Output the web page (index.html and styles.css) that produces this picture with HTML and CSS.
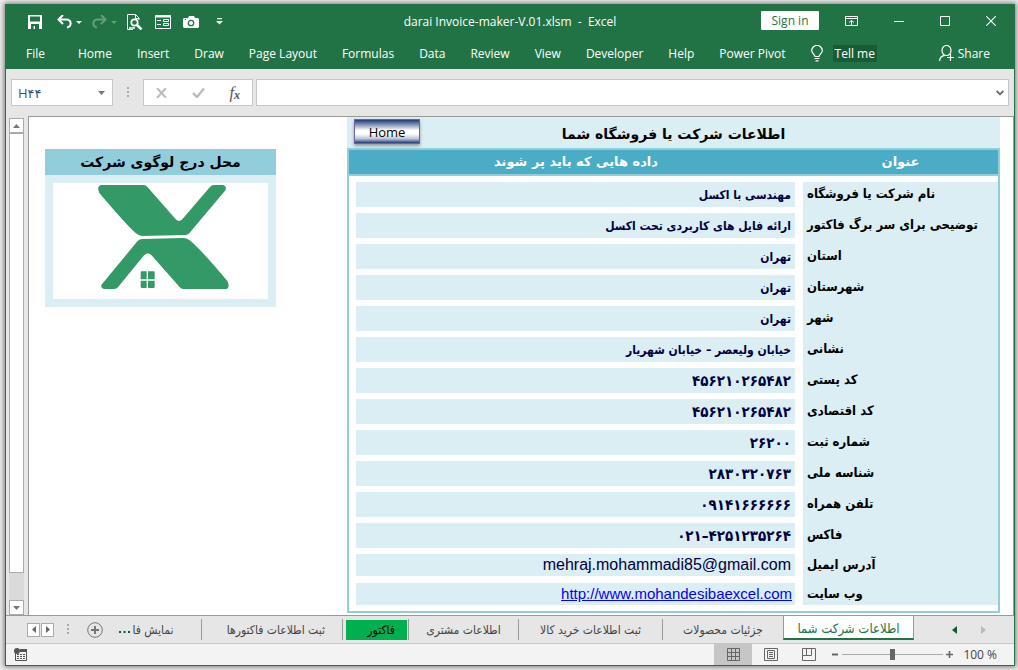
FILE: index.html
```html
<!DOCTYPE html>
<html lang="fa">
<head>
<meta charset="utf-8">
<title>darai Invoice-maker-V.01.xlsm - Excel</title>
<link rel="stylesheet" href="styles.css">
</head>
<body>
<div class="window">
  <header class="titlebar">
    <div class="quick">
      <button class="plain" aria-label="Save"><svg width="14" height="14" viewBox="0 0 14 14"><path fill="#fff" fill-rule="evenodd" d="M0 0h14v14H0zM2 1.500v5h10v-5zM3 9v5h2.500v-3H7v3h4V9z"/></svg></button>
      <button class="plain undo" aria-label="Undo"><svg width="25" height="14" viewBox="0 0 25 14"><path d="M1.500 4.500H9c6 0 6 7 1 8M6 0L1.500 4.500 6 9" fill="none" stroke="#fff" stroke-width="2"/><path fill="#fff" d="M19 6h6l-3 3z"/></svg></button>
      <button class="plain redo" aria-label="Redo"><svg width="25" height="14" viewBox="0 0 25 14"><path d="M13.500 4.500H6c-6 0-6 7-1 8M9 0l4.500 4.500L9 9" fill="none" stroke="#fff" stroke-width="2"/><path fill="#fff" d="M19 6h6l-3 3z"/></svg></button>
      <button class="plain" aria-label="Print preview"><svg width="16" height="16" viewBox="0 0 16 16" fill="none" stroke="#fff"><path d="M12 6V4L8.500.500H.500v15H6M8.500 1v3.500H12"/><circle cx="7.500" cy="8.500" r="3.200" stroke-width="1.700"/><path d="M10 11l4.500 4.500" stroke-width="2.600"/><path d="M2 14h6" stroke-width="1.500"/></svg></button>
      <button class="plain" aria-label="Form"><svg width="16" height="14" viewBox="0 0 16 14" fill="none" stroke="#fff"><path d="M.5.5h15v13H.5z"/><path stroke-width="2" d="M0 1.500h16"/><path d="M2 5.500h4M2 9.500h4M8.500 4.500h5v2h-5zM8.500 8.500h5v2h-5z"/></svg></button>
      <button class="plain" aria-label="Camera"><svg width="16" height="12" viewBox="0 0 16 12"><path fill="#fff" d="M1 2h4l1-2h5l1 2h3l1 1v8l-1 1H1l-1-1V3z"/><circle cx="8" cy="7" r="2.700" fill="none" stroke="#217346" stroke-width="1.300"/><path fill="#217346" d="M2 3h1v1H2z"/></svg></button>
      <button class="plain" aria-label="Customize toolbar"><svg width="7" height="7" viewBox="0 0 7 7"><path fill="#fff" d="M1 0h5v1.300H1zM0 3h7L3.500 6.500z"/></svg></button>
    </div>
    <div class="doc-name">darai Invoice-maker-V.01.xlsm&nbsp; -&nbsp; Excel</div>
    <div class="window-tools">
      <button class="signin">Sign in</button>
      <button class="plain" aria-label="Ribbon display"><svg width="13" height="10" viewBox="0 0 13 10" fill="none" stroke="#fff"><path d="M.5.500h12v9H.500zM.500 2.500h12M6.500 9V4.500M4 6.500l2.500-2 2.500 2"/></svg></button>
      <button class="plain" aria-label="Minimize"><svg width="10" height="10" viewBox="0 0 10 10"><path d="M0 5.500h10" stroke="#fff"/></svg></button>
      <button class="plain" aria-label="Maximize"><svg width="10" height="10" viewBox="0 0 10 10"><path d="M.5.500h9v9h-9z" fill="none" stroke="#fff"/></svg></button>
      <button class="plain" aria-label="Close"><svg width="10" height="10" viewBox="0 0 10 10"><path d="M0 0l10 10M10 0L0 10" stroke="#fff" stroke-width="1.200"/></svg></button>
    </div>
  </header>

  <nav class="ribbon" dir="ltr">
    <button class="plain file">File</button>
    <button class="plain">Home</button>
    <button class="plain">Insert</button>
    <button class="plain">Draw</button>
    <button class="plain">Page Layout</button>
    <button class="plain">Formulas</button>
    <button class="plain">Data</button>
    <button class="plain">Review</button>
    <button class="plain">View</button>
    <button class="plain">Developer</button>
    <button class="plain">Help</button>
    <button class="plain">Power Pivot</button>
    <button class="plain tell"><svg width="12" height="17" viewBox="0 0 12 17" fill="none" stroke="#fff" stroke-width="1.200"><path d="M4 11.500C4 9.500.700 8.500.700 5.500a5.300 5 0 0 1 10.600 0C11.300 8.500 8 9.500 8 11.500zM3.500 13.500h5M4.500 15.800h3"/></svg><span>Tell me</span></button>
    <button class="plain share"><svg width="15" height="17" viewBox="0 0 15 17" fill="none" stroke="#fff" stroke-width="1.200"><ellipse cx="7.500" cy="5.500" rx="4.500" ry="5"/><path d="M.600 16c0-3 2-5 5-5.600M8 12.500h7M11.500 9v7"/></svg>Share</button>
  </nav>

  <div class="formula-bar">
    <div class="name-box">
      <input type="text" aria-label="Name box" value="H۴۴">
      <button class="plain" aria-label="Open name list"><svg width="7" height="4" viewBox="0 0 7 4"><path fill="#777" d="M0 0h7L3.500 4z"/></svg></button>
    </div>
    <svg class="dots" width="3" height="11" viewBox="0 0 3 11"><path fill="#aaa" d="M0 0h2v2H0zM0 4h2v2H0zM0 8h2v2H0z"/></svg>
    <div class="formula-tools">
      <button class="plain" aria-label="Cancel"><svg width="11" height="10" viewBox="0 0 11 10"><path d="M1 0l9 10M10 0L1 10" stroke="#bbb" stroke-width="2"/></svg></button>
      <button class="plain" aria-label="Enter"><svg width="13" height="10" viewBox="0 0 13 10"><path d="M1 5l4 4 7-8.500" fill="none" stroke="#bbb" stroke-width="2.400"/></svg></button>
      <button class="plain fx" aria-label="Insert function"><i>f</i><i class="fx-x">x</i></button>
    </div>
    <div class="formula-input">
      <input type="text" aria-label="Formula">
      <button class="plain" aria-label="Expand formula bar"><svg width="8" height="6" viewBox="0 0 8 6"><path d="M.700 1L4 4.300 7.300 1" fill="none" stroke="#666" stroke-width="1.800"/></svg></button>
    </div>
  </div>

  <main class="work">
    <div class="scrollbar">
      <button class="plain scroll-button" aria-label="Scroll up"><svg width="7" height="4" viewBox="0 0 7 4"><path fill="#777" d="M3.500 0L7 4H0z"/></svg></button>
      <div class="thumb"></div>
      <div class="track"></div>
      <button class="plain scroll-button" aria-label="Scroll down"><svg width="7" height="4" viewBox="0 0 7 4"><path fill="#777" d="M0 0h7L3.500 4z"/></svg></button>
    </div>
    <div class="sheet">
      <section class="logo-card">
        <h2 dir="rtl">محل درج لوگوی شرکت</h2>
        <div class="logo-frame">
          <svg viewBox="0 0 645 348" role="img" aria-label="Logo"><g transform="translate(-159 -219)" fill="#339966">
            <path d="M303 225H430Q438 225 443 232L522 322Q537 344 552 322L630 231Q634 225 642 225H668Q680 226 677 240L571 366Q566 374 558 375L425 378Q416 377 408 370Q382 348 298 249Q289 230 303 225Z"/>
            <path d="M304 525L412 394Q418 387 427 387L546 384Q558 383 568 390Q600 415 682 513Q691 530 680 537H550Q543 537 538 530L456 437Q444 422 431 437L355 530Q350 537 342 537H314Q302 536 304 525Z"/>
            <path d="M422 488q0-4 4-4h14v24h-18zM444 484h16q4 0 4 4v20h-20zM422 512h18v22h-14q-4 0-4-4zM444 512h20v18q0 4-4 4h-16z"/></g></svg>
        </div>
      </section>
      <section class="company">
        <div class="company-title">
          <button class="home">Home</button>
          <h1 dir="rtl">اطلاعات شرکت یا فروشگاه شما</h1>
        </div>
        <table>
          <thead><tr><th scope="col" dir="rtl">داده هایی که باید پر شوند</th><th scope="col" dir="rtl">عنوان</th></tr></thead>
          <tbody>
            <tr class="lead"><td></td><th></th></tr>
            <tr><td><bdi>مهندسی با اکسل</bdi></td><th scope="row"><bdi>نام شرکت یا فروشگاه</bdi></th></tr>
            <tr><td><bdi>ارائه فایل های کاربردی تحت اکسل</bdi></td><th scope="row"><bdi>توضیحی برای سر برگ فاکتور</bdi></th></tr>
            <tr><td><bdi>تهران</bdi></td><th scope="row"><bdi>استان</bdi></th></tr>
            <tr><td><bdi>تهران</bdi></td><th scope="row"><bdi>شهرستان</bdi></th></tr>
            <tr><td><bdi>تهران</bdi></td><th scope="row"><bdi>شهر</bdi></th></tr>
            <tr><td><bdi>خیابان ولیعصر – خیابان شهریار</bdi></td><th scope="row"><bdi>نشانی</bdi></th></tr>
            <tr><td class="number">۴۵۶۲۱۰۲۶۵۴۸۲</td><th scope="row"><bdi>کد پستی</bdi></th></tr>
            <tr><td class="number">۴۵۶۲۱۰۲۶۵۴۸۲</td><th scope="row"><bdi>کد اقتصادی</bdi></th></tr>
            <tr><td class="number">۲۶۲۰۰</td><th scope="row"><bdi>شماره ثبت</bdi></th></tr>
            <tr><td class="number">۲۸۳۰۳۲۰۷۶۳</td><th scope="row"><bdi>شناسه ملی</bdi></th></tr>
            <tr><td class="number">۰۹۱۴۱۶۶۶۶۶۶</td><th scope="row"><bdi>تلفن همراه</bdi></th></tr>
            <tr><td class="number">۰۲۱–۴۲۵۱۲۳۵۲۶۴</td><th scope="row"><bdi>فاکس</bdi></th></tr>
            <tr class="web"><td>mehraj.mohammadi85@gmail.com</td><th scope="row"><bdi>آدرس ایمیل</bdi></th></tr>
            <tr class="web last"><td><a href="http://www.mohandesibaexcel.com">http://www.mohandesibaexcel.com</a></td><th scope="row"><bdi>وب سایت</bdi></th></tr>
          </tbody>
        </table>
      </section>
    </div>
  </main>

  <nav class="sheets">
    <div class="sheet-nav">
      <button class="plain step" aria-label="Scroll left"><svg width="4" height="7" viewBox="0 0 4 7"><path fill="#666" d="M4 0v7L0 3.500z"/></svg></button>
      <button class="plain step" aria-label="Scroll right"><svg width="4" height="7" viewBox="0 0 4 7"><path fill="#666" d="M0 0v7l4-3.500z"/></svg></button>
      <svg class="dots" width="3" height="11" viewBox="0 0 3 11"><path fill="#aaa" d="M0 0h2v2H0zM0 4h2v2H0zM0 8h2v2H0z"/></svg>
      <button class="plain add" aria-label="New sheet"><svg width="16" height="16" viewBox="0 0 16 16" fill="none" stroke="#777"><circle cx="8" cy="8" r="7.300"/><path stroke-width="2" d="M4 8h8M8 4v8"/></svg></button>
      <button class="plain more" aria-label="More sheets"><svg width="11" height="2" viewBox="0 0 11 2"><path fill="#0b5c2e" d="M0 0h2v2H0zM4.500 0h2v2h-2zM9 0h2v2H9z"/></svg></button>
    </div>
    <button class="tab t-view">نمایش فا</button>
    <button class="tab t-invoices">ثبت اطلاعات فاکتورها</button>
    <button class="tab t-invoice"><span>فاکتور</span></button>
    <button class="tab t-customer">اطلاعات مشتری</button>
    <button class="tab t-buy">ثبت اطلاعات خرید کالا</button>
    <button class="tab t-products">جزئیات محصولات</button>
    <button class="tab t-active">اطلاعات شرکت شما</button>
    <div class="tab-arrows">
      <button class="plain" aria-label="Next sheet"><svg width="5" height="8" viewBox="0 0 5 8"><path fill="#0b5c2e" d="M5 0v8L0 4z"/></svg></button>
      <button class="plain" aria-label="Previous sheet"><svg width="5" height="8" viewBox="0 0 5 8"><path fill="#bbb" d="M0 0v8l5-4z"/></svg></button>
    </div>
  </nav>

  <footer class="status">
    <button class="plain macro" aria-label="Record macro"><svg width="13" height="13" viewBox="0 0 13 13"><path fill="none" stroke="#555" d="M1.500 5v7.500h11V1.500H7"/><path fill="#555" d="M6 1h7v3H6zM3 6h2v1H3zM6 6h2v1H6zM9 6h2v1H9zM3 8h2v1H3zM6 8h2v1H6zM9 8h2v1H9zM3 10h2v1H3zM6 10h2v1H6zM9 10h2v1H9z"/><circle cx="3" cy="3" r="3" fill="#555"/></svg></button>
    <div class="views">
      <button class="plain view on" aria-label="Normal"><svg width="13" height="13" viewBox="0 0 13 13" fill="none" stroke="#666"><path d="M.5.500h12v12H.500zM.500 4.500h12M.500 8.500h12M4.500.500v12M8.500.500v12"/></svg></button>
      <button class="plain view" aria-label="Page layout"><svg width="14" height="13" viewBox="0 0 14 13" fill="none" stroke="#666"><path d="M.5.500h13v12H.500zM3.500 2.500h7v8h-7zM5 4.500h4M5 6.500h4M5 8.500h4"/></svg></button>
      <button class="plain view" aria-label="Page break preview"><svg width="14" height="13" viewBox="0 0 14 13" fill="none" stroke="#666"><path d="M.5.500h13v12H.500zM4.500.500v7M9.500.500v7M.500 7.500h9"/></svg></button>
    </div>
    <div class="zoom">
      <button class="plain" aria-label="Zoom out"><svg width="7" height="7" viewBox="0 0 7 7"><path d="M0 3.500h6" stroke="#666" stroke-width="2"/></svg></button>
      <input type="range" min="0" max="100" value="50" aria-label="Zoom">
      <button class="plain" aria-label="Zoom in"><svg width="7" height="7" viewBox="0 0 7 7"><path d="M0 3.500h7M3.500 0v7" stroke="#666" stroke-width="1.600"/></svg></button>
      <span>100 %</span>
    </div>
  </footer>
</div>
</body>
</html>
```

FILE: styles.css
```css
* { box-sizing: border-box; }

body {
  margin: 0;
  height: 100vh;
  padding: 4px 3px 4px 5px;
  background: #ececec;
  font-family: "Open Sans", "Noto Sans", "DejaVu Sans", sans-serif;
  font-size: 12px;
}

button, input { font: inherit; color: inherit; }

.plain {
  display: flex;
  align-items: center;
  justify-content: center;
  margin: 0;
  padding: 0;
  border: 0;
  background: none;
}

svg { display: block; flex: none; }

.window {
  display: flex;
  flex-direction: column;
  height: 100%;
  border: 1px solid #217346;
  background: #e6e6e6;
  box-shadow: 0 0 5px 1px #777;
}

/* Title bar */
.titlebar {
  display: grid;
  grid-template-columns: 1fr auto 1fr;
  align-items: center;
  height: 33px;
  flex: none;
  background: #217346;
  color: #fff;
}

.quick { display: flex; align-items: center; gap: 12px; padding-left: 22px; }
.undo { margin-left: 3px; }
.redo { opacity: 0.3; margin: 0 -2px 0 -2px; }
.quick > :last-child { margin-left: 5px; }

.window-tools {
  display: flex;
  align-items: center;
  justify-content: flex-end;
  gap: 36px;
  padding: 0 18px 2px 0;
}

.signin {
  width: 58px;
  height: 19px;
  margin-right: -10px;
  padding: 0;
  border: 0;
  border-radius: 1px;
  background: #fff;
  color: #217346;
  line-height: 18px;
}

.ribbon {
  display: flex;
  align-items: center;
  gap: 25px;
  height: 31px;
  flex: none;
  padding: 0 24px 0 20px;
  background: #217346;
  color: #fff;
  white-space: nowrap;
}

.file { margin-right: 8px; }
.tell { gap: 10px; }
.tell span { background: #185c37; line-height: 17px; padding: 0 2px; }
.share { margin-left: auto; gap: 4px; }

/* Formula bar */
.formula-bar {
  display: flex;
  align-items: center;
  height: 47px;
  flex: none;
  padding: 0 5px;
}

.name-box, .formula-tools, .formula-input {
  display: flex;
  align-items: center;
  height: 27px;
  border: 1px solid #c6c6c6;
  background: #fff;
}

.name-box { width: 102px; padding: 0 7px 0 6px; }

.formula-bar input {
  flex: 1;
  min-width: 0;
  padding: 0;
  border: 0;
  outline: 0;
  background: none;
}

.name-box input { color: #33507c; font-size: 13px; }
.formula-bar .dots { margin: 0 13px 0 14px; }
.formula-tools { width: 110px; justify-content: space-between; padding: 0 12px; }
.fx { font: 16px/16px "Liberation Serif", serif; color: #555; }
.fx-x { font-size: 12px; font-weight: bold; padding-top: 4px; }
.formula-input { flex: 1; margin-left: 3px; padding: 0 4px; }

/* Worksheet */
.work { display: flex; flex: 1; min-height: 0; }

.scrollbar {
  display: flex;
  flex-direction: column;
  width: 15px;
  margin: 2px 4px 0 3px;
  background: #dadada;
}

.scroll-button { height: 15px; border: 1px solid #ababab; background: #fff; }
.thumb { flex: 16; border: 1px solid #ababab; background: #fff; }
.track { flex: 1; }

.sheet {
  display: flex;
  gap: 71px;
  align-items: flex-start;
  flex: 1;
  border: 1px solid #999;
  border-bottom: 0;
  background: #fff;
  padding: 0 13px 0 16px;
}

.logo-card { width: 231px; margin-top: 32px; background: #daeef3; }

.logo-card h2, .company h1 {
  margin: 0;
  font: bold 14px/26px "DejaVu Sans", sans-serif;
  text-align: center;
}

.logo-card h2 { background: #92cddc; }
.logo-frame { padding: 8px; }
.logo-frame svg { width: 100%; background: #fff; }

.company { flex: 1; }
.company-title { position: relative; height: 31px; background: #daeef3; }
.company h1 { line-height: 34px; }

.home {
  position: absolute;
  left: 7px;
  top: 2px;
  width: 66px;
  height: 25px;
  padding: 0;
  border: 1px solid #7360a0;
  background: linear-gradient(#1f3a78, #fff 45%, #fff 60%, #b9c2d6 82%, #1f3a78);
  box-shadow: 0 2px 3px #999;
  font-size: 13px;
  line-height: 22px;
  color: #000;
}

table {
  width: 100%;
  border: 2px solid #92cddc;
  border-spacing: 0;
  table-layout: fixed;
  font: bold 12px/16px "DejaVu Sans Condensed", "DejaVu Sans", sans-serif;
}

th, td { padding: 0; }

thead th {
  height: 26px;
  border-bottom: 2px solid #92cddc;
  background: #4bacc6;
  color: #fff;
  font: bold 13px/16px "DejaVu Sans", sans-serif;
}

thead th:last-child { width: 195px; }

tbody td {
  height: 31px;
  padding-right: 4px;
  border: solid #fff;
  border-width: 0 8px 6px 7px;
  background: #daeef3;
  color: #000040;
  text-align: right;
}

tbody th {
  padding: 0 0 7px 4px;
  background: #daeef3;
  font-size: 13px;
  text-align: left;
}

.number { font-size: 15px; }
.lead td, .lead th { height: 6px; padding: 0; background: #fff; border: 0; }
.web td { height: 29px; border-bottom-width: 7px; font: 16px/20px "Liberation Sans", sans-serif; }
.last th { border-bottom: 6px solid #fff; padding-bottom: 0; }
.last td { height: 28px; border-bottom-width: 6px; padding-right: 3px; font-size: 15px; }
a { color: #00f; }

/* Sheet tabs */
.sheets {
  display: flex;
  height: 28px;
  flex: none;
  border-top: 1px solid #999;
  direction: ltr;
}

.sheet-nav { display: flex; align-items: center; width: 125px; padding-left: 21px; }
.step { width: 13px; height: 14px; margin-right: 1px; border: 1px solid #ababab; background: #fff; }
.sheet-nav .dots { margin: 0 17px 0 12px; }
.more { margin: 4px 0 0 16px; }

.tab {
  min-width: 0;
  margin: 3px 0;
  padding: 0;
  border: 0;
  border-right: 1px solid #999;
  background: none;
  color: #444;
  font: 12px/20px "DejaVu Sans Condensed", "DejaVu Sans", sans-serif;
  direction: rtl;
  white-space: nowrap;
}

.t-view { flex: 71 1 71px; padding-right: 26px; }
.t-invoices { flex: 141 1 141px; padding-right: 17px; text-align: right; }
.t-invoice { flex: 66 1 66px; padding: 0 1px 0 3px; }
.t-invoice span { display: block; padding-right: 12px; text-align: right; background: #00b050; color: #000; }
.t-customer { flex: 110 1 110px; }
.t-buy { flex: 144 1 144px; }
.t-products { flex: 120 1 120px; border-right: 0; }

.t-active {
  flex: 131 1 131px;
  margin: 0 0 3px;
  border: 1px solid #999;
  border-width: 0 1px;
  border-bottom: 2px solid #217346;
  padding-top: 3px;
  background: #fff;
  color: #217346;
  font-size: 13px;
}

.tab-arrows { display: flex; align-items: center; gap: 24px; width: 100px; padding-left: 38px; }

/* Status bar */
.status {
  display: flex;
  align-items: center;
  height: 22px;
  flex: none;
  border-top: 1px solid #c6c6c6;
  background: #f3f3f3;
  color: #444;
}

.macro { margin-left: 8px; }
.views { display: flex; height: 100%; margin-left: auto; }
.view { width: 38px; }
.on { background: #c6c6c6; }
.zoom { display: flex; align-items: center; gap: 3px; padding: 0 17px 0 4px; }
.zoom span { margin-left: 7px; }

.zoom input { appearance: none; width: 101px; height: 12px; margin: 0; background: linear-gradient(#aaa, #aaa) center / 100% 1px no-repeat; }
.zoom input::-webkit-slider-thumb { appearance: none; width: 5px; height: 11px; background: #666; }
```
